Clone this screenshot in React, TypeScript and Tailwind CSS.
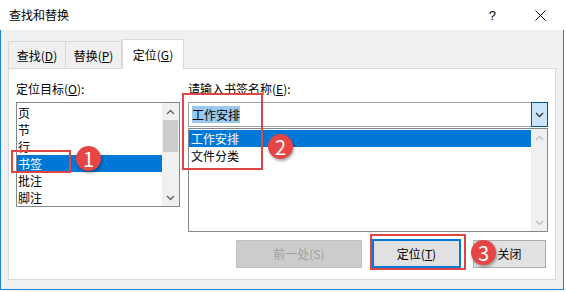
const cjk = { fontFamily: '"Microsoft YaHei UI", "Noto Sans CJK SC", sans-serif' };

function Chevron({ up, color = "#606060" }: { up?: boolean; color?: string }) {
  return (
    <svg width="9" height="6" viewBox="0 0 9 6" className={up ? "rotate-180" : ""}>
      <path d="M1 1 L4.5 4.5 L8 1" fill="none" stroke={color} strokeWidth="1.3" />
    </svg>
  );
}

function Badge({ n }: { n: number }) {
  return (
    <div className="w-[25px] h-[25px] rounded-full bg-[#e64545] shadow-[1px_2px_3px_rgba(0,0,0,0.35)] flex items-center justify-center text-white text-[20px] leading-none">
      {n}
    </div>
  );
}

export default function App() {
  const leftItems = ["页", "节", "行", "书签", "批注", "脚注"];

  return (
    <div className="w-[566px] h-[292px] bg-white text-[12px] text-black relative overflow-hidden" style={cjk}>
      <div className="w-[564px] h-[290px] flex flex-col">
        {/* Title bar */}
        <div className="h-[30px] bg-white flex items-center pl-[9px] shrink-0">
          <span className="text-[12px] leading-none">查找和替换</span>
          <span className="ml-auto mr-[39px] text-[13px] leading-none" style={{ fontFamily: '"Liberation Sans", sans-serif' }}>?</span>
          <svg width="11" height="11" viewBox="0 0 11 11" className="mr-[18px]">
            <path d="M0.5 0.5 L10.5 10.5 M10.5 0.5 L0.5 10.5" stroke="#000" strokeWidth="1" />
          </svg>
        </div>

        {/* Body */}
        <div className="flex-1 bg-[#f0f0f0] border-l border-r border-b border-[#1883d7] pl-[7px] pr-[7px] pt-[9px] pb-[9px] flex flex-col">
          {/* Tabs */}
          <div className="flex items-end h-[29px] relative z-10">
            <div className="h-[27px] w-[58px] border border-b-0 border-[#d9d9d9] flex items-center justify-center pt-[1px]">
              <span>查找(<u>D</u>)</span>
            </div>
            <div className="h-[27px] w-[56px] border border-b-0 border-l-0 border-[#d9d9d9] flex items-center justify-center pt-[1px]">
              <span>替换(<u>P</u>)</span>
            </div>
            <div className="h-[30px] w-[62px] -mb-[1px] bg-white border border-b-0 border-[#d9d9d9] flex items-center justify-center">
              <span>定位(<u>G</u>)</span>
            </div>
          </div>

          {/* Panel */}
          <div className="flex-1 bg-white border border-[#d9d9d9] pl-[7px] pt-[13px] flex gap-[8px]">
            {/* Left column */}
            <div className="w-[164px] flex flex-col">
              <div className="h-[20px] leading-[14px]">定位目标(<u>O</u>):</div>
              <div className="h-[105px] border border-[#828790] flex">
                <div className="flex-1 pt-[1px]">
                  {leftItems.map((t) => (
                    <div
                      key={t}
                      className={
                        "h-[17px] leading-[17px] pl-[1px] " +
                        (t === "书签" ? "bg-[#0078d7] text-white" : "")
                      }
                    >
                      {t}
                    </div>
                  ))}
                </div>
                <div className="w-[17px] bg-[#f0f0f0] flex flex-col items-center">
                  <div className="h-[17px] flex items-center justify-center">
                    <Chevron up />
                  </div>
                  <div className="w-[15px] h-[32px] bg-[#cdcdcd]" />
                  <div className="flex-1" />
                  <div className="h-[17px] flex items-center justify-center">
                    <Chevron />
                  </div>
                </div>
              </div>
            </div>

            {/* Right column */}
            <div className="w-[360px] flex flex-col">
              <div className="h-[20px] leading-[14px]">请输入书签名称(<u>E</u>):</div>
              <div className="h-[25px] border border-[#a0a0a0] flex items-stretch">
                <div className="flex-1 flex items-center pl-[3px]">
                  <span className="bg-[#99c9ef] leading-[17px]">工作安排</span>
                </div>
                <div className="w-[17px] -my-[1px] -mr-[1px] bg-[#cce4f7] border border-[#005499] flex items-center justify-center">
                  <Chevron color="#333" />
                </div>
              </div>
              <div className="h-[104px] mt-[1px] border border-[#828790] flex">
                <div className="flex-1 pt-[1px]">
                  <div className="h-[17px] leading-[17px] pl-[2px] bg-[#0078d7] text-white">工作安排</div>
                  <div className="h-[17px] leading-[17px] pl-[2px]">文件分类</div>
                </div>
                <div className="w-[16px] bg-[#f0f0f0] flex flex-col items-center">
                  <div className="h-[17px] flex items-center justify-center">
                    <Chevron up color="#c0c0c0" />
                  </div>
                  <div className="flex-1" />
                  <div className="h-[17px] flex items-center justify-center">
                    <Chevron color="#c0c0c0" />
                  </div>
                </div>
              </div>

              {/* Buttons */}
              <div className="mt-[7px] flex items-center pl-[48px]">
                <div className="w-[126px] h-[28px] bg-[#cccccc] border border-[#bfbfbf] text-[#a0a0a0] flex items-center justify-center">
                  前一处(S)
                </div>
                <div className="ml-[10px] w-[89px] h-[29px] bg-[#e1e1e1] border-2 border-[#0078d7] flex items-center justify-center">
                  定位(<u>T</u>)
                </div>
                <div className="ml-[12px] w-[73px] h-[28px] bg-[#e1e1e1] border border-[#adadad] flex items-center justify-center">
                  关闭
                </div>
              </div>
            </div>
          </div>
        </div>
      </div>

      {/* Annotations */}
      <div className="absolute left-[11px] top-[150px] w-[60px] h-[23px] border-2 border-[#e04545]" />
      <div className="absolute left-[76px] top-[146px]"><Badge n={1} /></div>
      <div className="absolute left-[182px] top-[93px] w-[81px] h-[77px] border-2 border-[#e04545]" />
      <div className="absolute left-[268px] top-[134px]"><Badge n={2} /></div>
      <div className="absolute left-[370px] top-[234px] w-[96px] h-[36px] border-2 border-[#e04545]" />
      <div className="absolute left-[471px] top-[240px]"><Badge n={3} /></div>
    </div>
  );
}
